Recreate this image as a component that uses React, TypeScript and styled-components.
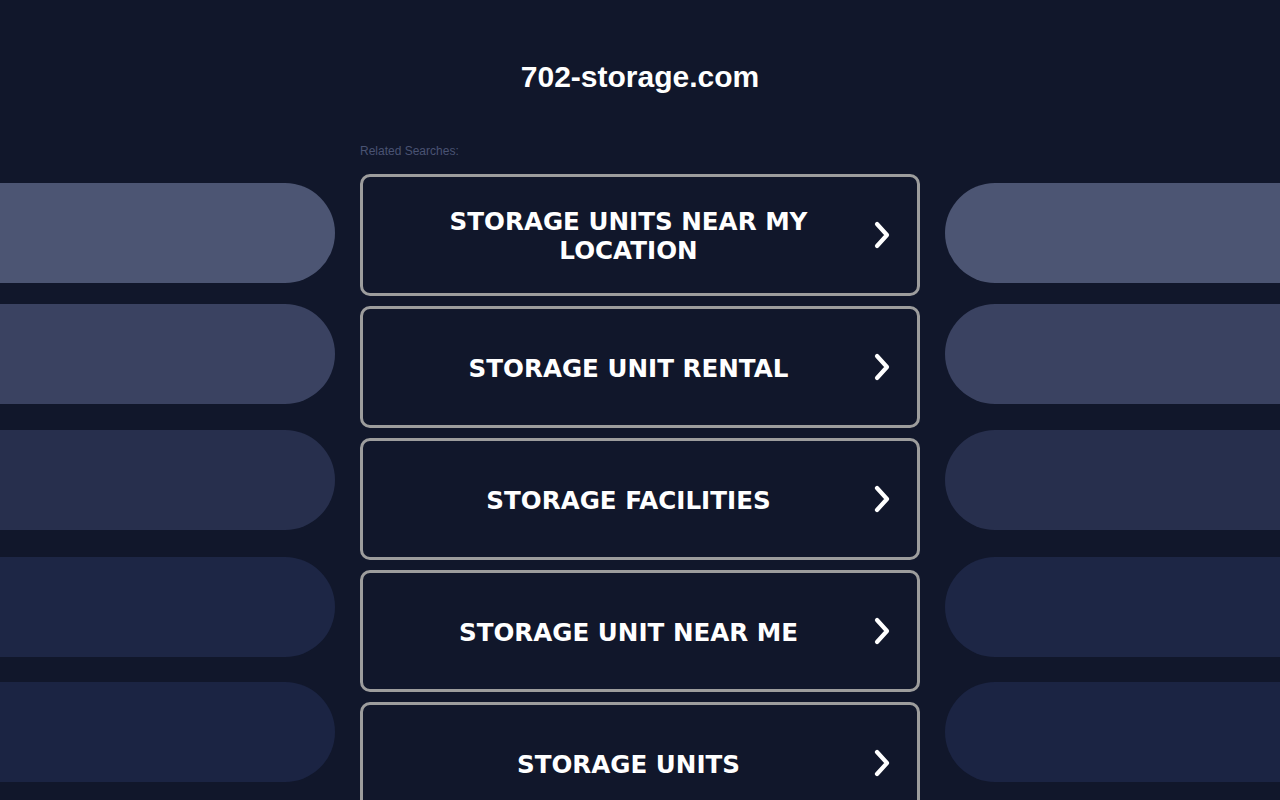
import styled, { createGlobalStyle } from 'styled-components';

const GlobalStyle = createGlobalStyle`
  html, body {
    margin: 0;
    padding: 0;
    background: #11172b;
    overflow: hidden;
  }
`;

const Page = styled.div`
  width: 1280px;
  height: 800px;
  overflow: hidden;
  background: #11172b;
  font-family: 'Liberation Sans', Arial, sans-serif;
`;

const Header = styled.h1`
  margin: 0;
  padding-top: 61px;
  height: 32px;
  line-height: 32px;
  font-size: 30px;
  font-weight: bold;
  color: #ffffff;
  text-align: center;
`;

const Layout = styled.div`
  display: grid;
  grid-template-columns: 335px 560px 335px;
  column-gap: 25px;
  margin-top: 51px;
`;

const Side = styled.div`
  display: flex;
  flex-direction: column;
  padding-top: 39px;
`;

const Pill = styled.div<{ $shade: string; $side: 'left' | 'right'; $space: number }>`
  height: 100px;
  margin-top: ${(p) => p.$space}px;
  background: ${(p) => p.$shade};
  border-radius: ${(p) => (p.$side === 'left' ? '0 50px 50px 0' : '50px 0 0 50px')};
`;

const Center = styled.div`
  display: flex;
  flex-direction: column;
`;

const Caption = styled.div`
  font-size: 12px;
  line-height: 14px;
  color: #4a5373;
  margin-bottom: 16px;
`;

const SearchList = styled.div`
  display: flex;
  flex-direction: column;
  gap: 10px;
`;

const SearchButton = styled.a`
  display: flex;
  align-items: center;
  box-sizing: border-box;
  height: 122px;
  padding: 0 27px 0 20px;
  border: 3px solid #9d9d9d;
  border-radius: 10px;
  background: #11172b;
  text-decoration: none;
  cursor: pointer;
`;

const Label = styled.span`
  flex: 1;
  text-align: center;
  font-family: 'DejaVu Sans', Verdana, sans-serif;
  font-weight: bold;
  font-size: 24.6px;
  line-height: 29px;
  color: #ffffff;
  padding: 2px 20px 0;
`;

const Chevron = () => (
  <svg width="16" height="28" viewBox="0 0 16 28" fill="none">
    <path
      d="M3 3 L13 14 L3 25"
      stroke="#ffffff"
      strokeWidth="4.2"
      strokeLinecap="round"
      strokeLinejoin="round"
    />
  </svg>
);

// shade and space above each side pill
const pills = [
  { shade: '#4c5573', space: 0 },
  { shade: '#3a4261', space: 21 },
  { shade: '#272f4d', space: 26 },
  { shade: '#1d2645', space: 27 },
  { shade: '#1b2443', space: 25 },
];

const searches = [
  'STORAGE UNITS NEAR MY LOCATION',
  'STORAGE UNIT RENTAL',
  'STORAGE FACILITIES',
  'STORAGE UNIT NEAR ME',
  'STORAGE UNITS',
];

export default function App() {
  return (
    <Page>
      <GlobalStyle />
      <Header>702-storage.com</Header>
      <Layout>
        <Side>
          {pills.map((p) => (
            <Pill key={p.shade} $shade={p.shade} $space={p.space} $side="left" />
          ))}
        </Side>
        <Center>
          <Caption>Related Searches:</Caption>
          <SearchList>
            {searches.map((q) => (
              <SearchButton key={q}>
                <Label>{q}</Label>
                <Chevron />
              </SearchButton>
            ))}
          </SearchList>
        </Center>
        <Side>
          {pills.map((p) => (
            <Pill key={p.shade} $shade={p.shade} $space={p.space} $side="right" />
          ))}
        </Side>
      </Layout>
    </Page>
  );
}
